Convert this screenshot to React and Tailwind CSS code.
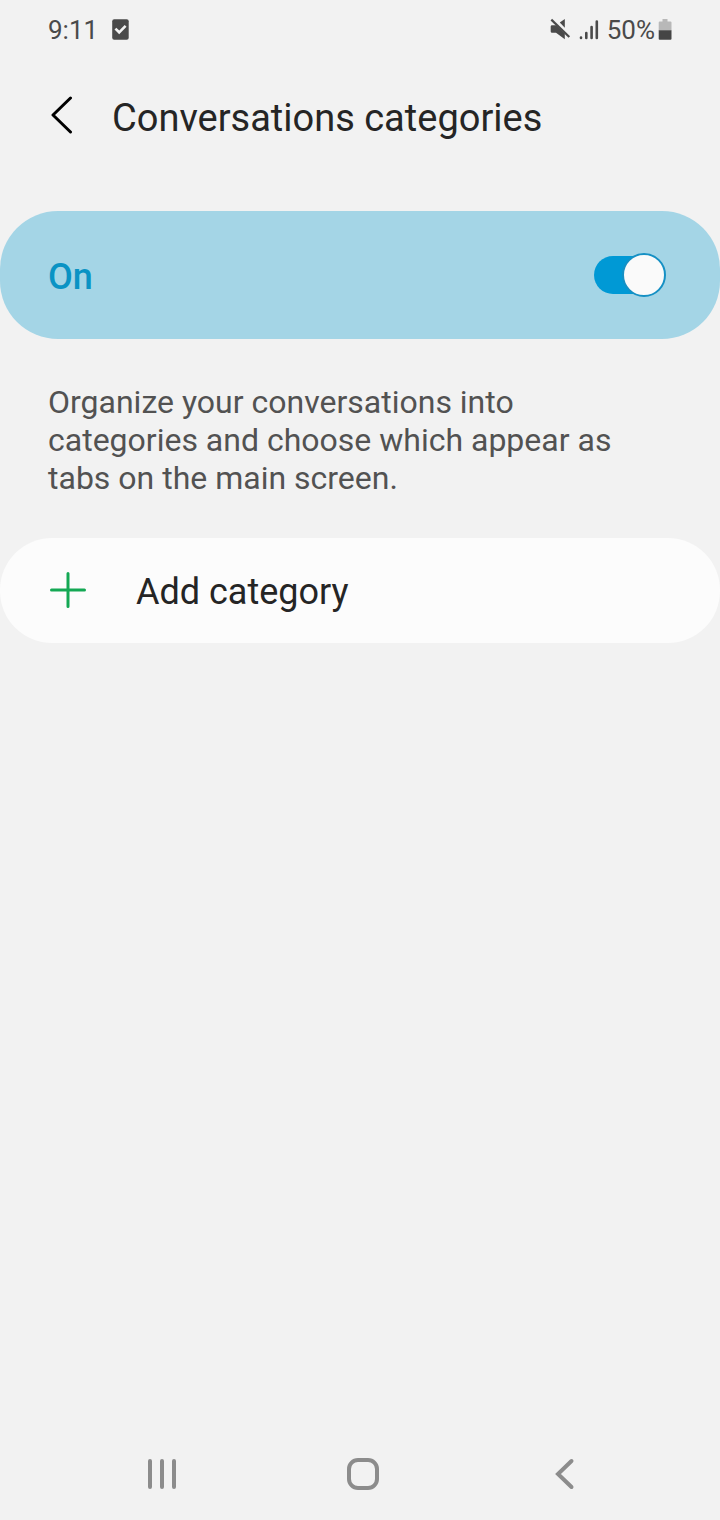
import { useState } from "react";

function StatusBar() {
  return (
    <header className="flex h-[60px] items-center justify-between px-12 text-[26px] leading-8 text-[#4a4a4a]">
      <div className="flex items-center gap-[14px]">
        <time>9:11</time>
        <svg className="h-[22px] w-[18px]" viewBox="0 0 18 22" aria-hidden="true">
          <rect x="0.2" y="0.3" width="16.5" height="20.5" rx="2" fill="#4a4a4a" />
          <path d="M3.4 9.6 7.2 13.3 13.6 6.8" fill="none" stroke="#f2f2f2" strokeWidth="2.6" />
        </svg>
      </div>
      <div className="flex items-center">
        <svg className="mr-[7px] h-[24px] w-[22px]" viewBox="0 0 22 24" fill="#4a4a4a" aria-hidden="true">
          <path d="M9.8 4.6 14.8 1v8.8z" />
          <path d="M0.7 8.5q0-1.3 1.3-1.3H6l8.8 8.3v5.7L6 14.8H2q-1.3 0-1.3-1.3z" />
          <path d="M1.3 1.6 19.3 19" stroke="#4a4a4a" strokeWidth="2.2" />
        </svg>
        <svg className="mr-2 h-[22px] w-[20px]" viewBox="0 0 20 22" aria-hidden="true">
          <path d="M2 18.5v0.5M7.3 14v5M12.6 8v11M17.8 2.5v16.5" stroke="#4a4a4a" strokeWidth="2.6" strokeLinecap="round" />
        </svg>
        <span>50%</span>
        <svg className="ml-[3px] h-[22px] w-[14px]" viewBox="0 0 14 22" aria-hidden="true">
          <path d="M4.5 0h5v2.5h3q1 0 1 1v8H0.7v-8q0-1 1-1h2.8z" fill="#b8b8b8" />
          <path d="M0.7 11.2h12.8V19.8q0 1-1 1H1.7q-1 0-1-1z" fill="#454545" />
        </svg>
      </div>
    </header>
  );
}

function NavBar() {
  return (
    <nav className="flex h-[92px] items-center pl-[61px] pr-[55px] text-[#8c8c8c]">
      <button type="button" aria-label="Recent apps" className="flex flex-1 justify-center">
        <svg className="h-[32px] w-[32px]" viewBox="0 0 32 32" fill="none" stroke="currentColor" strokeWidth="4" strokeLinecap="round">
          <path d="M4 3v26M16 3v26M28 3v26" />
        </svg>
      </button>
      <button type="button" aria-label="Home" className="flex flex-1 justify-center">
        <svg className="h-[32px] w-[32px]" viewBox="0 0 32 32" fill="none" stroke="currentColor" strokeWidth="4">
          <rect x="2" y="2" width="28" height="28" rx="9" />
        </svg>
      </button>
      <button type="button" aria-label="Back" className="flex flex-1 justify-center">
        <svg className="h-[32px] w-[32px]" viewBox="0 0 32 32" fill="none" stroke="currentColor" strokeWidth="4" strokeLinecap="round">
          <path d="M23.5 3 10 16l13.5 13" />
        </svg>
      </button>
    </nav>
  );
}

export default function App() {
  const [enabled, setEnabled] = useState(true);
  return (
    <div className="flex min-h-screen flex-col bg-[#f2f2f2] font-['Roboto',sans-serif] text-[#252525]">
      <StatusBar />
      <div className="flex h-[112px] items-center gap-8 px-12">
        <button type="button" aria-label="Navigate up">
          <svg className="h-[40px] w-[32px]" viewBox="0 0 32 40" fill="none" stroke="#000" strokeWidth="3" strokeLinecap="round" strokeLinejoin="round">
            <path d="M22.5 2 5 19 22.5 36" />
          </svg>
        </button>
        <h1 className="pt-[3px] text-[38px] leading-[48px]">Conversations categories</h1>
      </div>
      <main className="flex-1 pt-[39px]">
        <label className="flex h-32 items-center justify-between rounded-[58px] bg-[#a4d5e6] pl-12 pr-[54px]">
          <span className="pt-[3px] text-[36px] font-medium leading-[48px] text-[#0a93c4]">{enabled ? "On" : "Off"}</span>
          <span className="relative flex h-11 w-[72px] items-center">
            <input
              type="checkbox"
              role="switch"
              checked={enabled}
              onChange={(e) => setEnabled(e.target.checked)}
              className="peer h-[38px] w-[68px] appearance-none rounded-full bg-[#8f8f8f] checked:bg-[#0099d5]"
            />
            <span className="pointer-events-none absolute left-0 top-0 size-11 rounded-full border-2 border-[#8f8f8f] bg-[#fafafa] peer-checked:left-auto peer-checked:right-0 peer-checked:border-[#1590c4]" />
          </span>
        </label>
        <p className="mt-11 max-w-[680px] px-12 text-[32px] leading-[38px] text-[#525252]">
          Organize your conversations into categories and choose which appear as tabs on the main screen.
        </p>
        <button type="button" className="mt-[41px] flex h-[105px] w-full items-center gap-12 rounded-[52px] bg-[#fcfcfc] px-12 text-left text-[36px] leading-[48px]">
          <svg className="h-[40px] w-[40px]" viewBox="0 0 40 40" fill="none" stroke="#14a854" strokeWidth="3" strokeLinecap="round" aria-hidden="true">
            <path d="M20 2.5v33M3.5 19h33" />
          </svg>
          <span className="pt-[3px]">Add category</span>
        </button>
      </main>
      <NavBar />
    </div>
  );
}
